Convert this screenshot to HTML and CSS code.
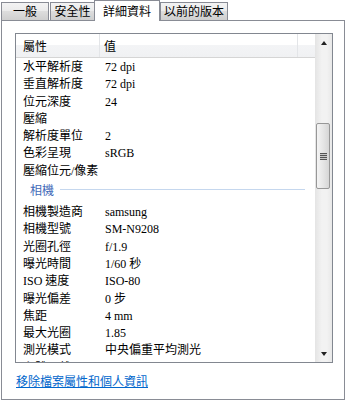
FILE: index.html
```html
<!DOCTYPE html>
<html lang="zh-Hant">
<head>
  <meta charset="UTF-8" />
  <title>內容</title>
  <link rel="stylesheet" href="styles.css">
</head>
<body>
  <div class="tabs">
    <div class="tab t1">一般</div>
    <div class="tab t2">安全性</div>
    <div class="tab active">詳細資料</div>
    <div class="tab t4">以前的版本</div>
  </div>

  <div class="panel">
    <div class="list">
      <div class="list-main">
        <div class="list-head">
          <div class="col-name">屬性</div>
          <div class="col-value">值</div>
          <div class="col-rest"></div>
        </div>
        <div class="list-body">
          <div class="row"><span class="name">水平解析度</span><span class="value">72 dpi</span></div>
          <div class="row"><span class="name">垂直解析度</span><span class="value">72 dpi</span></div>
          <div class="row"><span class="name">位元深度</span><span class="value">24</span></div>
          <div class="row"><span class="name">壓縮</span><span class="value"></span></div>
          <div class="row"><span class="name">解析度單位</span><span class="value">2</span></div>
          <div class="row"><span class="name">色彩呈現</span><span class="value">sRGB</span></div>
          <div class="row"><span class="name">壓縮位元/像素</span><span class="value"></span></div>
          <div class="group"><span class="group-label">相機</span><span class="group-line"></span></div>
          <div class="row"><span class="name">相機製造商</span><span class="value">samsung</span></div>
          <div class="row"><span class="name">相機型號</span><span class="value">SM-N9208</span></div>
          <div class="row"><span class="name">光圈孔徑</span><span class="value">f/1.9</span></div>
          <div class="row"><span class="name">曝光時間</span><span class="value">1/60 秒</span></div>
          <div class="row"><span class="name">ISO 速度</span><span class="value">ISO-80</span></div>
          <div class="row"><span class="name">曝光偏差</span><span class="value">0 步</span></div>
          <div class="row"><span class="name">焦距</span><span class="value">4 mm</span></div>
          <div class="row"><span class="name">最大光圈</span><span class="value">1.85</span></div>
          <div class="row"><span class="name">測光模式</span><span class="value">中央偏重平均測光</span></div>
          <div class="row"><span class="name">主體距離</span><span class="value"></span></div>
        </div>
      </div>
      <div class="scrollbar">
        <div class="sb-btn"><span class="arrow-up"></span></div>
        <div class="sb-track">
          <div class="sb-thumb">
            <span class="grip"></span>
          </div>
        </div>
        <div class="sb-btn"><span class="arrow-down"></span></div>
      </div>
    </div>

    <a class="remove-link" href="#">移除檔案屬性和個人資訊</a>
  </div>
</body>
</html>
```

FILE: styles.css
```css
body {
  margin: 0;
  background: #fff;
  font-family: "Liberation Serif", "Noto Sans CJK TC", serif;
  font-size: 12px;
  color: #000;
}
.tabs {
  display: flex;
  height: 20px;
  align-items: flex-end;
}
.tab {
  box-sizing: border-box;
  height: 18px;
  border: 1px solid #898c95;
  border-bottom: none;
  background: linear-gradient(#f3f3f3, #ebebeb 45%, #dddddd 50%, #cfcfcf);
  font-family: "Noto Sans CJK TC", sans-serif;
  font-size: 12px;
  line-height: 16px;
  text-align: center;
}
.t1 {
  margin-left: 1px;
  width: 48px;
}
.t2 {
  margin-left: 1px;
  width: 45px;
}
.active {
  position: relative;
  z-index: 1;
  width: 66px;
  height: 21px;
  margin-left: -1px;
  margin-bottom: -1px;
  background: #fff;
  line-height: 19px;
}
.t4 {
  width: 68px;
}
.panel {
  box-sizing: border-box;
  margin-left: 1px;
  width: 344px;
  height: 380px;
  border: 1px solid #898c95;
  padding: 12px 0 0 13px;
}
.list {
  box-sizing: border-box;
  width: 318px;
  height: 330px;
  border: 1px solid #828790;
  display: flex;
}
.list-main {
  flex: 1;
  overflow: hidden;
}
.list-head {
  display: flex;
  height: 23px;
  border-bottom: 1px solid #d5d5d5;
  background: linear-gradient(#ffffff, #ffffff 50%, #f3f4f6 50%, #f0f1f3);
  font-family: "Noto Sans CJK TC", sans-serif;
  line-height: 23px;
}
.col-name {
  box-sizing: border-box;
  width: 84px;
  padding-left: 7px;
  border-right: 1px solid #e3e5e8;
}
.col-value {
  box-sizing: border-box;
  width: 198px;
  padding-left: 4px;
  border-right: 1px solid #e3e5e8;
}
.col-rest {
  flex: 1;
}
.list-body {
  padding-top: 1px;
  height: 304px;
  overflow: hidden;
}
.row {
  display: flex;
  height: 17.3px;
  line-height: 17px;
  white-space: nowrap;
}
.name {
  width: 84px;
  padding-left: 7px;
  box-sizing: border-box;
}
.value {
  padding-left: 5px;
}
.group {
  display: flex;
  align-items: center;
  height: 24px;
  padding-bottom: 6px;
  box-sizing: border-box;
}
.group-label {
  padding-left: 14px;
  padding-right: 6px;
  color: #3f6ab8;
  font-family: "Noto Sans CJK TC", sans-serif;
}
.group-line {
  width: 245px;
  height: 1px;
  background: #c5d7ee;
}
.scrollbar {
  width: 17px;
  display: flex;
  flex-direction: column;
  background: linear-gradient(90deg, #e4e4e4, #f2f2f2 40%, #f2f2f2 70%, #e8e8e8);
}
.sb-btn {
  height: 17px;
  display: flex;
  align-items: center;
  justify-content: center;
}
.arrow-up {
  width: 0;
  height: 0;
  border-left: 3.5px solid transparent;
  border-right: 3.5px solid transparent;
  border-bottom: 4px solid #222;
}
.arrow-down {
  width: 0;
  height: 0;
  border-left: 3.5px solid transparent;
  border-right: 3.5px solid transparent;
  border-top: 4px solid #222;
}
.sb-track {
  flex: 1;
  padding-top: 72px;
}
.sb-thumb {
  box-sizing: border-box;
  margin-left: 1px;
  width: 14px;
  height: 66px;
  border: 1px solid #979797;
  border-radius: 2px;
  background: linear-gradient(90deg, #f4f4f4, #e6e6e6 50%, #d6d6d6);
  display: flex;
  align-items: center;
  justify-content: center;
}
.grip {
  width: 7px;
  height: 7px;
  background: repeating-linear-gradient(#555 0 1px, #c8c8c8 1px 2px);
}
.remove-link {
  display: inline-block;
  margin-top: 11px;
  margin-left: 1px;
  color: #0066cc;
  font-family: "Noto Sans CJK TC", sans-serif;
  font-size: 12px;
  line-height: 14px;
}
```
